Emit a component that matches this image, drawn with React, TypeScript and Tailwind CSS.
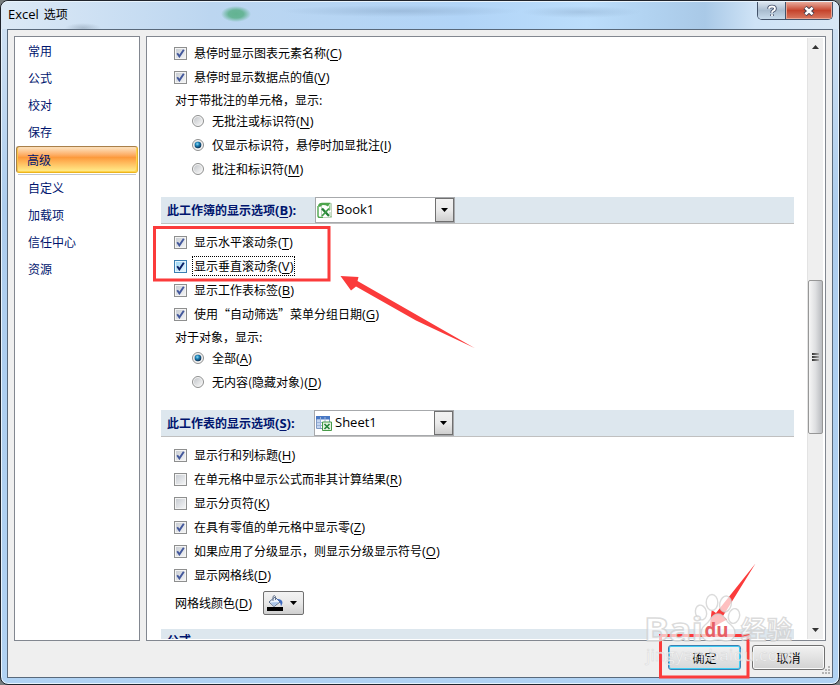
import React from "react";

const cjk = "font-['Noto_Sans_CJK_SC',sans-serif] text-[12px]";
const latin = "font-['Open_Sans','Noto_Sans_CJK_SC',sans-serif] text-[13px]";

function Label({ text, k, tail = "" }: { text: string; k?: string; tail?: string }) {
  return (
    <span className={`${cjk} flex h-4 items-center leading-4 whitespace-pre`}>
      <span>{text}</span>
      {k && (
        <span className={latin}>
          (<span className="underline decoration-1 underline-offset-2">{k}</span>){tail}
        </span>
      )}
      {!k && tail && <span className={latin}>{tail}</span>}
    </span>
  );
}

function Check({ text, k, on = true, hot = false }: { text: string; k: string; on?: boolean; hot?: boolean }) {
  return (
    <div className="flex h-6 items-center pl-[27px]">
      <span className={`block size-[13px] border p-px ${hot ? "border-[#3c7fb1] bg-[#e4f5fd]" : "border-[#8e8f8f] bg-[#f4f4f4]"}`}>
        <svg
          viewBox="0 0 9 9"
          className={`block size-[9px] bg-linear-to-br ${hot ? "from-[#9bd5f5] to-[#e6f6fd]" : "from-[#c9cdd3] to-[#f3f4f5]"}`}
        >
          {on && (
            <path d="M1.2 4.2 L3.4 7.4 L7.8 0.8" fill="none" stroke={hot ? "#0a1f66" : "#43589c"} strokeWidth="1.9" />
          )}
        </svg>
      </span>
      <span className={`ml-[5px] flex h-[20px] items-center border border-dotted px-px ${hot ? "border-black" : "border-transparent"}`}>
        <Label text={text} k={k} />
      </span>
    </div>
  );
}

function Radio({ text, k, on = false }: { text: string; k: string; on?: boolean }) {
  return (
    <div className="flex h-6 items-center pl-[45px]">
      <svg viewBox="0 0 12 12" className="mr-2 block size-3">
        <defs>
          <linearGradient id="radioBg" x1="0" y1="0" x2="1" y2="1">
            <stop offset="0" stopColor="#c4c7cb" />
            <stop offset="1" stopColor="#f6f6f6" />
          </linearGradient>
          <radialGradient id="radioDot" cx="0.4" cy="0.35" r="0.65">
            <stop offset="0" stopColor="#8fdcf5" />
            <stop offset="0.45" stopColor="#1b80b5" />
            <stop offset="1" stopColor="#0c2b4d" />
          </radialGradient>
        </defs>
        <circle cx="6" cy="6" r="5.5" fill="#f4f4f4" stroke="#8e8f8f" />
        <circle cx="6" cy="6" r="4" fill="url(#radioBg)" />
        {on && <circle cx="6" cy="6" r="3.3" fill="url(#radioDot)" />}
      </svg>
      <Label text={text} k={k} />
    </div>
  );
}

function BookIcon() {
  return (
    <svg viewBox="0 0 16 16" className="size-4">
      <path d="M4.5 1.5H14.5V15.5H4.5Z" fill="#fff" stroke="#c2d3c0" />
      <path d="M1 4Q1.5 0.8 5 0.8H13.5L11 4.5Q8 2.8 5 3.2L3 5Z" fill="#4da54c" />
      <path d="M13.5 0.8V8L12 9V5Z" fill="#86c582" />
      <path d="M1 4V14Q1 15.5 3 15.5H6" fill="none" stroke="#4da54c" strokeWidth="1.4" />
      <path d="M5 6.5L12 14" stroke="#248036" strokeWidth="2.4" />
      <path d="M12 6.5L5 14" stroke="#3f9c48" strokeWidth="1.8" />
      <path d="M13 10V14.5H15" stroke="#9dc99c" fill="none" />
    </svg>
  );
}

function SheetIcon() {
  return (
    <svg viewBox="0 0 16 16" className="size-4">
      <path d="M0.5 1.5H13.5V13.5H0.5Z" fill="#fff" stroke="#7f9ac4" />
      <path d="M0 1H14V4.5H0Z" fill="#4878c4" />
      <path d="M1 5H4V13H1Z" fill="#c4d5ef" />
      <path d="M4.5 2V13M9 2V13M1 7.5H13M1 10.5H13" stroke="#9eb5da" />
      <path d="M6.5 7H15.5V15.5H6.5Z" fill="#e5f3e0" stroke="#489b49" />
      <path d="M8.5 9L13.5 14M13.5 9L8.5 14" stroke="#25843a" strokeWidth="1.6" />
    </svg>
  );
}

function Combo({ icon, text }: { icon: React.ReactNode; text: string }) {
  return (
    <div className="flex h-[26px] w-[140px] items-center border border-[#a7a9ac] bg-white pl-px">
      {icon}
      <span className={`${latin} ml-[3px] flex-1 pb-0.5 leading-5 text-black`}>{text}</span>
      <span className="flex h-6 w-[19px] items-center justify-center border border-[#707070] bg-linear-to-b from-[#f2f2f2] via-[#ebebeb] to-[#cfcfcf]">
        <svg viewBox="0 0 7 4" className="h-1 w-[7px]"><path d="M0 0H7L3.5 4Z" /></svg>
      </span>
    </div>
  );
}

function Section({ text, k, comboLeft, icon, value }: { text: string; k: string; comboLeft: string; icon: React.ReactNode; value: string }) {
  return (
    <div className="flex h-[27px] w-[633px] items-start border-b border-[#c0c0c0] bg-[#dde7ee]">
      <div className={`${comboLeft} flex h-[25px] shrink-0 items-center pl-1.5 font-bold text-[#00156e]`}>
        <Label text={text} k={k} tail=":" />
      </div>
      <Combo icon={icon} text={value} />
    </div>
  );
}

const nav = ["常用", "公式", "校对", "保存", "高级", "自定义", "加载项", "信任中心", "资源"];

function Sidebar() {
  return (
    <div className="h-[605px] w-[126px] border border-[#828790] bg-white pt-px">
      {nav.map((n) =>
        n === "高级" ? (
          <div key={n} className="h-[29px] px-px">
            <div className="flex h-[27px] items-center rounded-[3px] border border-[#a9804a] border-r-[#e8b32c] border-b-[#ecb51e] bg-linear-to-b from-[#fcdcb4] from-5% via-[#fc9a3c] via-42% to-[#fff08d] pl-[10px] text-[#00156e] shadow-[inset_1px_0_0_#f7c54a,inset_-1px_-1px_0_#ffd34b]">
              <Label text={n} />
            </div>
            <div className="mx-0.5 mt-px h-px bg-[#c3c7cf]" />
          </div>
        ) : (
          <div key={n} className="flex h-[27px] items-center pb-px pl-[13px] text-[#00156e]">
            <Label text={n} />
          </div>
        ),
      )}
    </div>
  );
}

function ScrollBar() {
  return (
    <div className="mt-px flex h-[601px] w-4 shrink-0 flex-col items-center border-l border-[#e3e3e3] bg-[#efefef]">
      <svg viewBox="0 0 7 4" className="mt-[7px] h-1 w-[7px]"><path d="M0 4L3.5 0L7 4Z" fill="#333" /></svg>
      <div className="mt-[231px] flex h-[154px] w-[15px] shrink-0 flex-col items-center justify-center gap-px rounded-xs border border-[#979797] bg-linear-to-r from-[#f6f6f6] via-[#dedfe1] to-[#b9bbbf]">
        <span className="h-0.5 w-[7px] bg-linear-to-r from-[#333] to-[#aaa]" />
        <span className="h-0.5 w-[7px] bg-linear-to-r from-[#333] to-[#aaa]" />
        <span className="h-0.5 w-[7px] bg-linear-to-r from-[#333] to-[#aaa]" />
      </div>
      <svg viewBox="0 0 7 4" className="mt-auto mb-[7px] h-1 w-[7px]"><path d="M0 0H7L3.5 4Z" fill="#333" /></svg>
    </div>
  );
}

function ColorButton() {
  return (
    <div className="ml-[11px] flex h-6 w-[41px] items-center rounded-xs border border-[#707070] bg-linear-to-b from-[#f3f3f3] via-[#e8e8e8] to-[#cfcfcf] pl-[3px]">
      <svg viewBox="0 0 16 17" className="h-[17px] w-4">
        <path d="M0 12H16V16H0Z" />
        <path d="M2 7L8 2L13 7L7 11.5Z" fill="#e9f1fb" stroke="#5a6e8e" />
        <path d="M3.5 7.5L12 7L7 11Z" fill="#a9c4e8" />
        <path d="M6 6V1.5Q7.5 -0.5 8.5 1.5V5" fill="none" stroke="#65738a" />
        <path d="M10 4Q15.5 4 15.5 8L14 11.5Q13.5 7 11.5 5.5Z" fill="#3e6ac0" />
      </svg>
      <svg viewBox="0 0 7 4" className="ml-[7px] h-1 w-[7px]"><path d="M0 0H7L3.5 4Z" /></svg>
    </div>
  );
}

function Content() {
  return (
    <div className="flex h-[605px] w-[680px] overflow-hidden border border-[#828790] bg-white">
      <div className="mb-px flex w-[660px] shrink-0 flex-col overflow-hidden pt-1 pl-3.5 text-black *:shrink-0">
        <div className="-ml-3.5 pl-0">
          <Check text="悬停时显示图表元素名称" k="C" />
          <Check text="悬停时显示数据点的值" k="V" />
          <div className="flex h-5 items-center pt-0.5 pl-[28px]"><Label text="对于带批注的单元格，显示" tail=":" /></div>
          <Radio text="无批注或标识符" k="N" />
          <Radio text="仅显示标识符，悬停时加显批注" k="I" on />
          <Radio text="批注和标识符" k="M" />
        </div>
        <div className="mt-4">
          <Section text="此工作簿的显示选项" k="B" comboLeft="w-[154px]" icon={<BookIcon />} value="Book1" />
        </div>
        <div className="mt-1.5 -ml-3.5">
          <Check text="显示水平滚动条" k="T" />
          <Check text="显示垂直滚动条" k="V" hot />
          <Check text="显示工作表标签" k="B" />
          <Check text="使用“自动筛选”菜单分组日期" k="G" />
          <div className="flex h-5 items-center pt-0.5 pl-[28px]"><Label text="对于对象，显示" tail=":" /></div>
          <Radio text="全部" k="A" on />
          <Radio text="无内容(隐藏对象)" k="D" />
        </div>
        <div className="mt-4">
          <Section text="此工作表的显示选项" k="S" comboLeft="w-[153px]" icon={<SheetIcon />} value="Sheet1" />
        </div>
        <div className="mt-1.5 -ml-3.5">
          <Check text="显示行和列标题" k="H" />
          <Check text="在单元格中显示公式而非其计算结果" k="R" on={false} />
          <Check text="显示分页符" k="K" on={false} />
          <Check text="在具有零值的单元格中显示零" k="Z" />
          <Check text="如果应用了分级显示，则显示分级显示符号" k="O" />
          <Check text="显示网格线" k="D" />
          <div className="flex h-8 items-center pl-[28px]"><Label text="网格线颜色" k="D" /><ColorButton /></div>
        </div>
        <div className="mt-2.5 flex h-[27px] w-[633px] items-start bg-[#dde7ee] pt-[3px] pl-1.5 font-bold text-[#00156e]">
          <Label text="公式" />
        </div>
      </div>
      <ScrollBar />
    </div>
  );
}

function TitleBar() {
  return (
    <div className="flex h-[27px] items-start justify-between pl-px">
      <div className="mt-1 flex items-center gap-[5px] text-black">
        <span className={`${latin} leading-4`}>Excel</span>
        <Label text="选项" />
      </div>
      <div className="flex h-[18px] w-[76px] overflow-hidden rounded-b-[5px] border border-t-0 border-[#43536a]">
        <div className="flex w-[28px] items-center justify-center border-r border-[#43536a] bg-linear-to-b from-[#dce5ef] via-[#a9bccf] via-50% to-[#c8dbec]">
          <svg viewBox="0 0 10 13" className="h-3.5 w-2.5">
            <path d="M2 4.2Q2 2 5 2T8 4.2Q8 5.5 6.4 6.1Q5 6.7 5 8.2M5 9.8V11.6" fill="none" stroke="#46506b" strokeWidth="3.6" />
            <path d="M2 4.2Q2 2 5 2T8 4.2Q8 5.5 6.4 6.1Q5 6.7 5 8.2M5 9.8V11.6" fill="none" stroke="#fff" strokeWidth="1.8" />
          </svg>
        </div>
        <div className="flex flex-1 items-center justify-center bg-linear-to-b from-[#e6aa9d] via-[#c5432c] via-50% to-[#d97860] shadow-[inset_0_0_0_1px_#e9a593]">
          <svg viewBox="0 0 12 10" className="h-2.5 w-3">
            <path d="M2 1.5L10 8.5M10 1.5L2 8.5" stroke="#49404f" strokeWidth="4.6" />
            <path d="M2.4 1.8L9.6 8.2M9.6 1.8L2.4 8.2" stroke="#fff" strokeWidth="2.6" />
          </svg>
        </div>
      </div>
    </div>
  );
}

function Annotations() {
  return (
    <svg viewBox="0 0 840 685" className="pointer-events-none absolute inset-0 h-[685px] w-[840px]">
      <g fill="none" stroke="#fb3b3b" strokeWidth="3">
        <path d="M154.5 227.5H329V280H154.5Z" />
        <path d="M660.5 635.5H748V677H660.5Z" />
      </g>
      <path d="M340.5 276L358.5 277L357.5 281L474.5 348L416 320.5L356 286.5L351 290.5Z" fill="#fb3b3b" />
      <path d="M709.5 629L711.7 610L716 613L755.5 563.5L723 616L727 619.5Z" fill="#fb3b3b" />
      <g fill="#fff" fillOpacity="0.68" stroke="#cfcfcf" strokeOpacity="0.75" strokeWidth="1.4">
        <ellipse cx="701" cy="612.5" rx="5.5" ry="7.5" transform="rotate(-15 701 612.5)" />
        <ellipse cx="712" cy="602.5" rx="5.8" ry="8" />
        <ellipse cx="725.5" cy="604" rx="5.8" ry="8" transform="rotate(12 725.5 604)" />
        <ellipse cx="734" cy="616" rx="5.5" ry="7.5" transform="rotate(15 734 616)" />
        <path d="M718 614C711 614 711 621 705 625C698 631 702 642 711 641Q718 639 725 641C735 642 738 631 731 625C725 621 725 614 718 614Z" />
        <text x="644" y="641" fontFamily="'Open Sans', sans-serif" fontWeight="700" fontSize="33" textLength="59" lengthAdjust="spacingAndGlyphs">Bai</text>
        <text x="741" y="639" fontFamily="'Noto Sans CJK SC', sans-serif" fontWeight="700" fontSize="25" textLength="51">经验</text>
      </g>
      <text x="704.5" y="637" fontFamily="'Open Sans', sans-serif" fontWeight="700" fontSize="20" textLength="24" lengthAdjust="spacingAndGlyphs" fill="#e65f66">du</text>
      <text x="646" y="661" fontFamily="'Open Sans', sans-serif" fontSize="16.5" textLength="148" lengthAdjust="spacingAndGlyphs" fill="#fff" stroke="#d4d4d4" strokeWidth="0.5" opacity="0.8">jingyan.baidu.com</text>
    </svg>
  );
}

export default function App() {
  return (
    <div className="relative h-[685px] w-[840px] overflow-hidden bg-[#777d7e]">
      <div className="flex h-[685px] w-[840px] flex-col overflow-hidden rounded-[8px] border border-[#20242c] bg-linear-to-b from-[#d3e3f3] via-[#adcdee] via-30% to-[#b0d2f3] px-[6px] shadow-[inset_0_0_0_1px_#e8f3fc]">
        <div className="-mx-[6px] rounded-t-[7px] border-t border-[#e8f3fc] bg-[radial-gradient(15px_8px_at_235px_12px,#62b391_0%,#68b598_50%,transparent_100%),radial-gradient(18px_5px_at_82px_26px,#8799ab80_0%,transparent_100%),radial-gradient(120px_6px_at_400px_9px,#8ba9c98c_0%,transparent_100%),radial-gradient(60px_6px_at_580px_10px,#8ba9c970_0%,transparent_100%),linear-gradient(90deg,#dce9f6_0%,#bcd6f0_25%,#b1d4f7_55%,#bbddfb_70%,#a9c9e7_84%,#cfe3f6_90%,#d8e7f5_100%)] px-[6px]">
          <TitleBar />
        </div>
        <div className="h-[649px] w-[826px] shrink-0 border border-[#59697b] bg-[#efefef] px-1.5 pt-1.5">
          <div className="flex gap-1.5">
            <Sidebar />
            <Content />
          </div>
          <div className={`${cjk} flex justify-end gap-[11px] pt-1 pr-px text-black`}>
            <div className="flex h-[25px] w-[73px] items-center justify-center rounded-[3px] border border-[#3c7fb1] bg-linear-to-b from-[#f1f1f1] to-[#d6d8da] shadow-[inset_0_0_0_1px_#41cdf4]">确定</div>
            <div className="flex h-[25px] w-[73px] items-center justify-center rounded-[3px] border border-[#707070] bg-linear-to-b from-[#f2f2f2] to-[#d2d2d2] shadow-[inset_0_0_0_1px_#fafafa]">取消</div>
          </div>
        </div>
      </div>
      <svg viewBox="0 0 9 9" className="absolute top-[666px] left-[822px] size-[9px]" fill="#b4b4b4">
        <path d="M6 0h2v2h-2zM3 3h2v2h-2zM6 3h2v2h-2zM0 6h2v2h-2zM3 6h2v2h-2zM6 6h2v2h-2z" />
      </svg>
      <Annotations />
    </div>
  );
}
